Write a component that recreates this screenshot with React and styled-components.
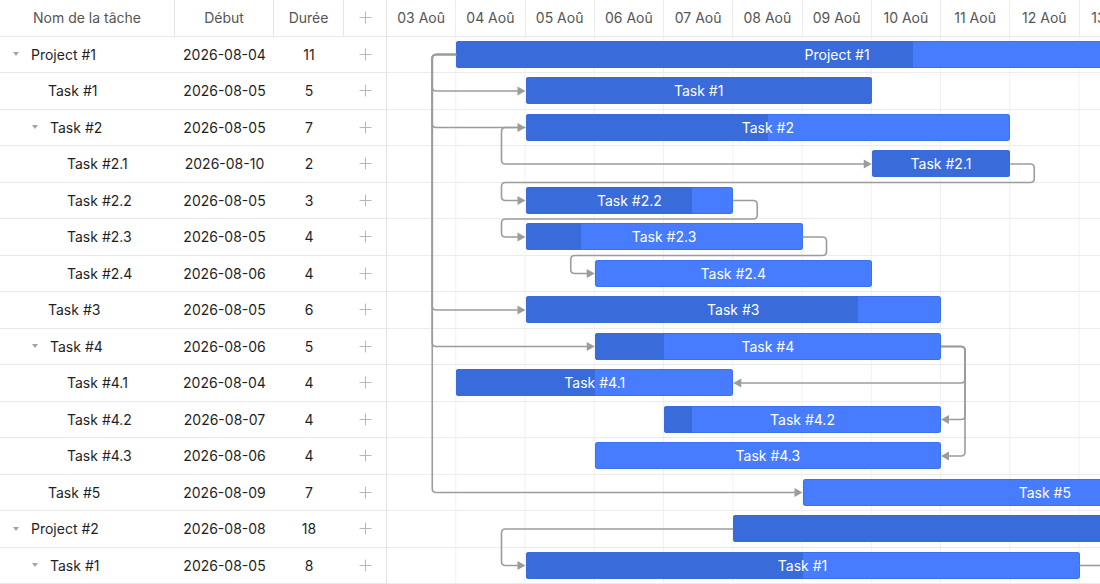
import React from "react";
import styled, { createGlobalStyle } from "styled-components";
import { Plus } from "lucide-react";

const ROW_H = 36.5;
const CELL_W = 69.25;
const BAR_TOP = 4;
const BAR_H = 27;
const FIRST_DAY = 3;
const DAY_COUNT = 24;

// span = days drawn on the chart when it differs from the duration shown in the grid
const tasks = [
  { text: "Project #1", start: "2026-08-04", duration: 11, level: 0, parent: true, progress: 0.6 },
  { text: "Task #1", start: "2026-08-05", duration: 5, level: 1, progress: 1 },
  { text: "Task #2", start: "2026-08-05", duration: 7, level: 1, parent: true, progress: 0.5 },
  { text: "Task #2.1", start: "2026-08-10", duration: 2, level: 2, progress: 1 },
  { text: "Task #2.2", start: "2026-08-05", duration: 3, level: 2, progress: 0.8 },
  { text: "Task #2.3", start: "2026-08-05", duration: 4, level: 2, progress: 0.2 },
  { text: "Task #2.4", start: "2026-08-06", duration: 4, level: 2, progress: 0 },
  { text: "Task #3", start: "2026-08-05", duration: 6, level: 1, progress: 0.8 },
  { text: "Task #4", start: "2026-08-06", duration: 5, level: 1, parent: true, progress: 0.2 },
  { text: "Task #4.1", start: "2026-08-04", duration: 4, level: 2, progress: 0.5 },
  { text: "Task #4.2", start: "2026-08-07", duration: 4, level: 2, progress: 0.1 },
  { text: "Task #4.3", start: "2026-08-06", duration: 4, span: 5, level: 2, progress: 0 },
  { text: "Task #5", start: "2026-08-09", duration: 7, level: 1, progress: 0 },
  { text: "Project #2", start: "2026-08-08", duration: 18, level: 0, parent: true, progress: 0.5 },
  { text: "Task #1", start: "2026-08-05", duration: 8, level: 1, parent: true, progress: 0.5 },
];

const span = (t) => t.span || t.duration;
const dayIndex = (date) => Number(date.slice(8)) - FIRST_DAY;
const barStart = (i) => dayIndex(tasks[i].start) * CELL_W;
const barEnd = (i) => (dayIndex(tasks[i].start) + span(tasks[i])) * CELL_W;
const rowMid = (i) => i * ROW_H + BAR_TOP + BAR_H / 2;
const rowLine = (i) => i * ROW_H - 0.5;
const GAP = 24;

// start -> start link
const s2s = (from, to) => [
  [barStart(from), rowMid(from)],
  [Math.min(barStart(from), barStart(to)) - GAP, rowMid(from)],
  [Math.min(barStart(from), barStart(to)) - GAP, rowMid(to)],
  [barStart(to), rowMid(to)],
];

// finish -> start link
const e2s = (from, to) => [
  [barEnd(from), rowMid(from)],
  [barEnd(from) + GAP, rowMid(from)],
  [barEnd(from) + GAP, rowLine(to)],
  [barStart(to) - GAP, rowLine(to)],
  [barStart(to) - GAP, rowMid(to)],
  [barStart(to), rowMid(to)],
];

// finish -> finish link
const e2e = (from, to) => [
  [barEnd(from), rowMid(from)],
  [Math.max(barEnd(from), barEnd(to)) + GAP, rowMid(from)],
  [Math.max(barEnd(from), barEnd(to)) + GAP, rowMid(to)],
  [barEnd(to), rowMid(to)],
];

const links = [
  s2s(0, 1), s2s(0, 2), s2s(0, 7), s2s(0, 8), s2s(0, 12),
  s2s(2, 3),
  e2s(3, 4), e2s(4, 5), e2s(5, 6),
  e2e(8, 9), e2e(8, 10), e2e(8, 11),
  s2s(13, 14),
];

const roundedPath = (pts, r = 4) => {
  let d = `M${pts[0][0]},${pts[0][1]}`;
  for (let i = 1; i < pts.length - 1; i++) {
    const [px, py] = pts[i - 1];
    const [cx, cy] = pts[i];
    const [nx, ny] = pts[i + 1];
    const inLen = Math.hypot(cx - px, cy - py);
    const outLen = Math.hypot(nx - cx, ny - cy);
    const a = Math.min(r, inLen / 2);
    const b = Math.min(r, outLen / 2);
    const bx = cx - ((cx - px) / inLen) * a;
    const by = cy - ((cy - py) / inLen) * a;
    const ax = cx + ((nx - cx) / outLen) * b;
    const ay = cy + ((ny - cy) / outLen) * b;
    d += ` L${bx},${by} Q${cx},${cy} ${ax},${ay}`;
  }
  const last = pts[pts.length - 1];
  return d + ` L${last[0]},${last[1]}`;
};

// stop the line under the arrow head
const trimEnd = (pts) => {
  const [tx, ty] = pts[pts.length - 1];
  const dir = tx > pts[pts.length - 2][0] ? 1 : -1;
  return pts.slice(0, -1).concat([[tx - dir * 7, ty]]);
};

const arrowHead = (pts) => {
  const [tx, ty] = pts[pts.length - 1];
  const [px] = pts[pts.length - 2];
  const dir = tx > px ? 1 : -1;
  return `${tx - dir * 8},${ty - 4.5} ${tx},${ty} ${tx - dir * 8},${ty + 4.5}`;
};

const GlobalStyle = createGlobalStyle`
  html, body {
    margin: 0;
    padding: 0;
    background: #fff;
    overflow: hidden;
  }
  body {
    font-family: Inter, "Noto Sans", sans-serif;
    font-size: 14px;
    color: #1f1f1f;
  }
`;

const Wrapper = styled.div`
  display: flex;
  width: 1100px;
  height: 584px;
  overflow: hidden;
`;

const GridPanel = styled.div`
  flex: 0 0 386px;
  border-right: 1px solid #e2e2e2;
  display: flex;
  flex-direction: column;
`;

const Row = styled.div`
  display: flex;
  height: ${ROW_H}px;
  box-sizing: border-box;
  border-bottom: 1px solid #e9e9e9;
  flex-shrink: 0;
`;

const HeadCell = styled.div`
  width: ${(p) => p.$w}px;
  box-sizing: border-box;
  border-right: ${(p) => (p.$last ? "none" : "1px solid #e6e6e6")};
  display: flex;
  align-items: center;
  justify-content: center;
  color: #555;
`;

const Cell = styled.div`
  width: ${(p) => p.$w}px;
  display: flex;
  align-items: center;
  justify-content: center;
  color: #1f1f1f;
`;

const NameCell = styled.div`
  width: 175px;
  display: flex;
  align-items: center;
  padding-left: ${(p) => 8 + p.$level * 19}px;
  box-sizing: border-box;
  white-space: nowrap;
`;

const Toggle = styled.span`
  width: 16px;
  margin-right: 7px;
  display: flex;
  justify-content: center;
  &::before {
    content: "";
    border-left: 3.5px solid transparent;
    border-right: 3.5px solid transparent;
    border-top: 4px solid #a3a3a3;
  }
`;

const Spacer = styled.span`
  width: 21px;
  flex-shrink: 0;
`;

const ChartPanel = styled.div`
  flex: 1;
  overflow: hidden;
  display: flex;
  flex-direction: column;
`;

const ScaleRow = styled.div`
  display: flex;
  height: ${ROW_H}px;
  box-sizing: border-box;
  border-bottom: 1px solid #e9e9e9;
  flex-shrink: 0;
`;

const ScaleCell = styled.div`
  flex: 0 0 ${CELL_W}px;
  box-sizing: border-box;
  border-right: 1px solid #ededed;
  display: flex;
  align-items: center;
  justify-content: center;
  color: #555;
  white-space: nowrap;
`;

const ChartBody = styled.div`
  position: relative;
  width: ${CELL_W * DAY_COUNT}px;
  background-image: linear-gradient(to left, #f0f0f0 1px, transparent 1px);
  background-size: ${CELL_W}px 100%;
`;

const ChartRow = styled.div`
  position: relative;
  height: ${ROW_H}px;
  box-sizing: border-box;
  border-bottom: 1px solid #ececec;
`;

const Bar = styled.div`
  position: absolute;
  top: ${BAR_TOP}px;
  height: ${BAR_H}px;
  border-radius: 3px;
  background: #477cff;
  box-shadow: inset 0 0 0 1px rgba(45, 100, 220, 0.45);
  overflow: hidden;
  display: flex;
  align-items: center;
  justify-content: center;
`;

const Progress = styled.div`
  position: absolute;
  left: 0;
  top: 0;
  bottom: 0;
  background: #396bdb;
`;

const BarLabel = styled.span`
  position: relative;
  color: #fff;
  white-space: nowrap;
`;

const Links = styled.svg`
  position: absolute;
  left: 0;
  top: 0;
  overflow: visible;
  pointer-events: none;
`;

const AddIcon = () => <Plus size={19} strokeWidth={1.2} color="#b3b3b3" />;

const days = Array.from({ length: DAY_COUNT }, (_, i) =>
  `${String(FIRST_DAY + i).padStart(2, "0")} Aoû`
);

const App = () => {
  return (
    <Wrapper>
      <GlobalStyle />
      <GridPanel>
        <Row>
          <HeadCell $w={175}>Nom de la tâche</HeadCell>
          <HeadCell $w={99}>Début</HeadCell>
          <HeadCell $w={70}>Durée</HeadCell>
          <HeadCell $w={42} $last>
            <AddIcon />
          </HeadCell>
        </Row>
        {tasks.map((t, i) => (
          <Row key={i}>
            <NameCell $level={t.level}>
              {t.parent ? <Toggle /> : <Spacer />}
              {t.text}
            </NameCell>
            <Cell $w={99}>{t.start}</Cell>
            <Cell $w={70}>{t.duration}</Cell>
            <Cell $w={42}>
              <AddIcon />
            </Cell>
          </Row>
        ))}
      </GridPanel>

      <ChartPanel>
        <ScaleRow>
          {days.map((d) => (
            <ScaleCell key={d}>{d}</ScaleCell>
          ))}
        </ScaleRow>
        <ChartBody>
          {tasks.map((t, i) => (
            <ChartRow key={i}>
              <Bar style={{ left: barStart(i), width: span(t) * CELL_W }}>
                <Progress style={{ width: `${t.progress * 100}%` }} />
                <BarLabel>{t.text}</BarLabel>
              </Bar>
            </ChartRow>
          ))}
          <Links width={CELL_W * DAY_COUNT} height={ROW_H * tasks.length}>
            {links.map((pts, i) => (
              <g key={i}>
                <path d={roundedPath(trimEnd(pts))} fill="none" stroke="#9c9c9c" strokeWidth="1.6" />
                <polygon points={arrowHead(pts)} fill="#9c9c9c" />
              </g>
            ))}
            <path
              d={`M${barEnd(14)},${rowMid(14)} H${barEnd(14) + GAP}`}
              fill="none"
              stroke="#9c9c9c"
              strokeWidth="1.6"
            />
          </Links>
        </ChartBody>
      </ChartPanel>
    </Wrapper>
  );
};

export default App;
